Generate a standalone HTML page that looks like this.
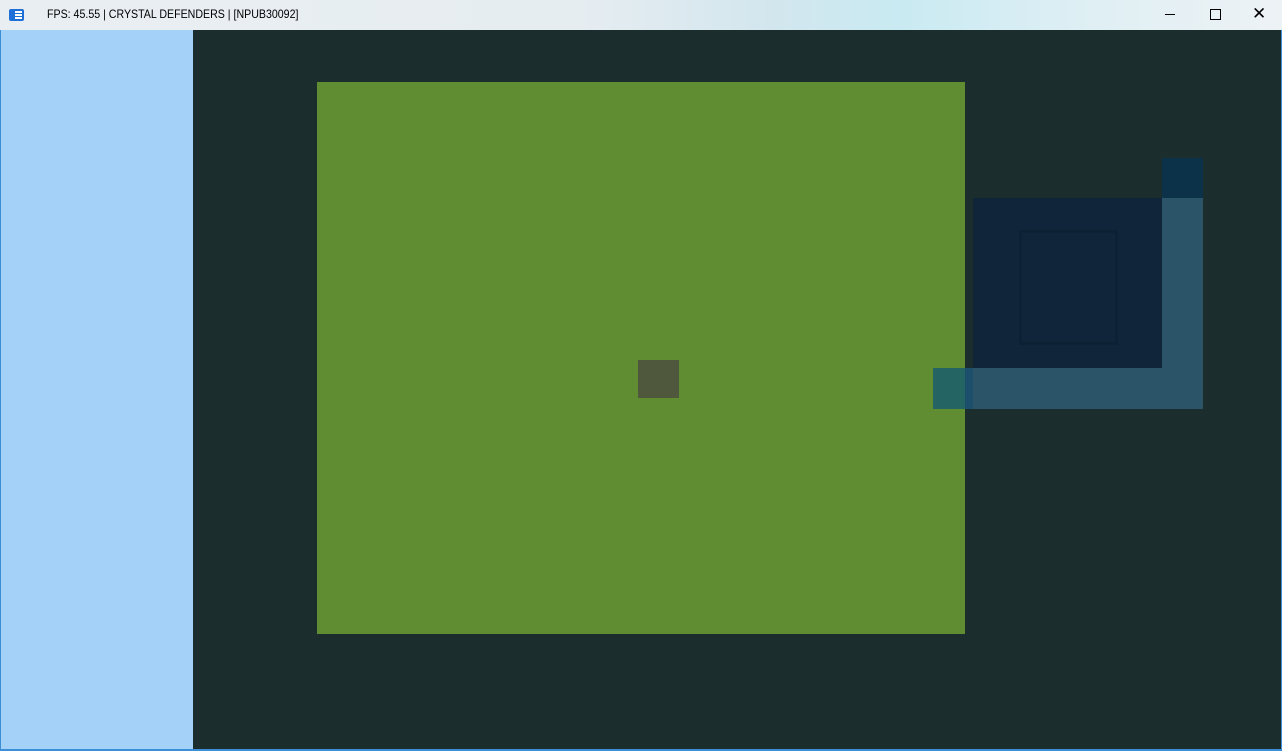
<!DOCTYPE html>
<html><head><style>
body{margin:0;width:1282px;height:751px;overflow:hidden;background:#1c2d2d;position:relative;font-family:"Liberation Sans",sans-serif}
div{position:absolute}
</style></head><body>
<div style="left:0;top:0;width:1282px;height:30px;background:linear-gradient(90deg,#e9eef2 0%,#e6edf1 45%,#d3e6ee 60%,#c9eaf2 70%,#dfeff4 85%,#edf2f5 100%)"></div>
<div style="left:9px;top:9px;width:15px;height:12px;background:#1f6fd8;border-radius:2px"></div>
<div style="left:15px;top:11px;width:7px;height:2px;background:#fff"></div>
<div style="left:15px;top:14px;width:7px;height:2px;background:#fff"></div>
<div style="left:15px;top:17px;width:7px;height:2px;background:#fff"></div>
<div style="left:47px;top:7px;font-size:12px;color:#000;white-space:nowrap;transform:scaleX(0.885);transform-origin:0 0">FPS: 45.55 | CRYSTAL DEFENDERS | [NPUB30092]</div>
<div style="left:1165px;top:14px;width:10px;height:1px;background:#000"></div>
<div style="left:1210px;top:9px;width:9px;height:9px;border:1px solid #000"></div>
<div style="left:1252px;top:4px;font-size:17px;color:#000">✕</div>
<div style="left:0;top:30px;width:1px;height:721px;background:#3c8fd6"></div>
<div style="left:1281px;top:30px;width:1px;height:721px;background:#3c8fd6"></div>
<div style="left:0;top:749px;width:1282px;height:2px;background:#3c8fd6"></div>
<div style="left:1px;top:30px;width:192px;height:719px;background:#a3d1f7"></div>
<div style="left:317px;top:82px;width:648px;height:552px;background:#608d31"></div>
<div style="left:638px;top:360px;width:41px;height:38px;background:#4f573c"></div>
<div style="left:1162px;top:158px;width:41px;height:40px;background:#0b3249"></div>
<div style="left:973px;top:198px;width:189px;height:170px;background:#10253a"></div>
<div style="left:1019px;top:230px;width:93px;height:109px;border:3px solid #0d2134"></div>
<div style="left:1162px;top:198px;width:41px;height:211px;background:#2c5469"></div>
<div style="left:965px;top:368px;width:197px;height:41px;background:#2c5469"></div>
<div style="left:965px;top:368px;width:8px;height:41px;background:#1b4f6b"></div>
<div style="left:933px;top:368px;width:32px;height:41px;background:#246564"></div>
</body></html>
